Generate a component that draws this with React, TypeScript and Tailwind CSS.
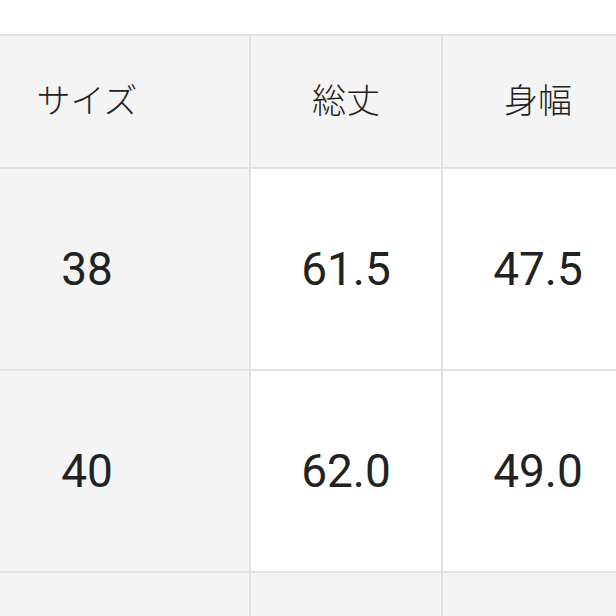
const headers = ['サイズ', '総丈', '身幅']

const rows = [
  ['38', '61.5', '47.5'],
  ['40', '62.0', '49.0'],
]

const cellBase = 'flex items-center justify-center'

const App = () => {
  return (
    <div className="h-[616px] w-[616px] overflow-hidden bg-white pt-[34px] font-['Roboto','Noto_Sans_CJK_JP',sans-serif] text-[#222222]">
      <div className="grid w-[631px] grid-cols-[249px_190px_190px] gap-[2px] border-t-2 border-[#dfe2e6] bg-[#dfe2e6]">
        {headers.map((h, i) => (
          <div
            key={h}
            className={`${cellBase} h-[131px] bg-[#f4f4f4] text-[34px] font-light ${i === 0 ? 'pr-[75px]' : ''}`}
          >
            {h}
          </div>
        ))}
        {rows.map((row) =>
          row.map((v, i) => (
            <div
              key={row[0] + i}
              className={`${cellBase} h-[200px] text-[46px] ${i === 0 ? 'bg-[#f4f4f4] pr-[75px]' : 'bg-white'}`}
            >
              {v}
            </div>
          ))
        )}
        {headers.map((h) => (
          <div key={'last' + h} className="h-[60px] bg-[#f4f4f4]" />
        ))}
      </div>
    </div>
  )
}

export default App
